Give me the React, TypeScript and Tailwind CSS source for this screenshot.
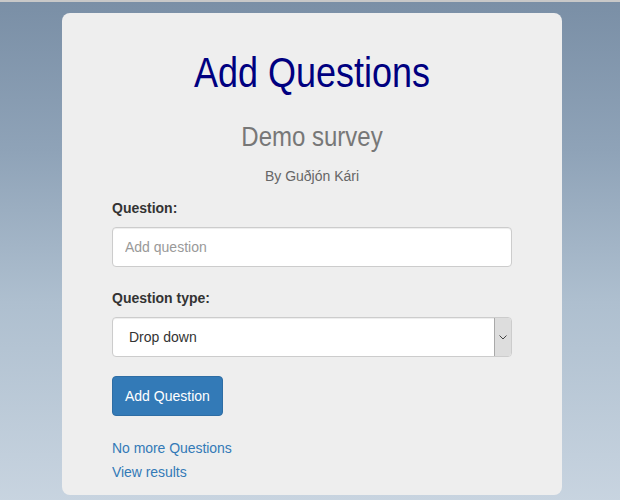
const App = () => {
  return (
    <div
      className="min-h-[500px] w-full border-t-2 border-[#c8c8c8] bg-[linear-gradient(180deg,#7a8fa6_0%,#8fa3b8_30%,#aebfcf_60%,#c8d4e0_100%)] pt-[11px] pb-[7px] font-['Liberation_Sans',Arial,sans-serif]"
    >
      <div className="ml-[62px] flex w-[500px] flex-col rounded-lg bg-[#eeeeee] px-[50px] pt-[36px] pb-[14px]">
        <h1 className="text-center text-[36px] leading-[48px] text-[#000080] scale-y-[1.19]">Add Questions</h1>
        <h2 className="mt-[25px] text-center text-[24px] leading-[30px] text-[#777777] scale-y-[1.15]">Demo survey</h2>
        <p className="mt-[14px] text-center text-[14px] leading-[20px] text-[#666666] scale-y-105">By Guðjón Kári</p>

        <label className="mt-[12px] text-[14px] font-bold leading-[20px] text-[#333333]">Question:</label>
        <input
          type="text"
          placeholder="Add question"
          className="mt-[9px] h-[40px] w-full rounded-[4px] border border-[#cccccc] bg-white px-[12px] text-[14px] text-[#555555] shadow-[inset_0_1px_1px_rgba(0,0,0,0.075)] placeholder:text-[#999999] outline-none"
        />

        <label className="mt-[21px] text-[14px] font-bold leading-[20px] text-[#333333]">Question type:</label>
        <div className="mt-[9px] flex h-[40px] w-full overflow-hidden rounded-[4px] border border-[#cccccc] bg-white shadow-[inset_0_1px_1px_rgba(0,0,0,0.075)]">
          <span className="flex flex-1 items-center pl-[16px] text-[14px] text-[#333333]">Drop down</span>
          <span className="flex w-[17px] items-center justify-center border-l border-[#a9a9a9] bg-[#dddddd]">
            <svg width="8" height="5" viewBox="0 0 8 5" fill="none">
              <path d="M0.5 0.5 L4 4 L7.5 0.5" stroke="#444444" strokeWidth="1" />
            </svg>
          </span>
        </div>

        <div className="mt-[19px]">
          <button className="h-[40px] rounded-[4px] border border-[#2e6da4] bg-[#337ab7] px-[12px] text-[14px] text-white">
            Add Question
          </button>
        </div>

        <a className="mt-[21px] text-[14px] leading-[20px] text-[#337ab7] tracking-[-0.05px] scale-y-110 origin-left">No more Questions</a>
        <a className="mt-[4px] text-[14px] leading-[20px] text-[#337ab7] tracking-[-0.05px] scale-y-110 origin-left">View results</a>
      </div>
    </div>
  );
};

export default App;
